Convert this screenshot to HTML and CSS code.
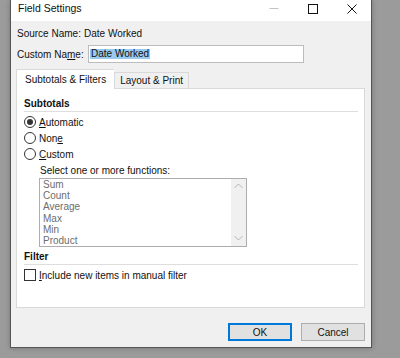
FILE: index.html
```html
<!DOCTYPE html>
<html lang="en">
<head><meta charset="UTF-8">
<meta name="viewport" content="width=device-width,initial-scale=1.0">
<title>Field Settings</title>
<link rel="stylesheet" href="styles.css">
</head>
<body>

<div class="dialog">
  <!-- title bar -->
  <div class="titlebar">
    <span class="title">Field Settings</span>
    <div class="controls">
      <span class="ctl"><svg width="10" height="10" viewBox="0 0 10 10"><path d="M0.5 4.5h9" stroke="#c4c4c4" stroke-width="1"/></svg></span>
      <span class="ctl"><svg width="10" height="10" viewBox="0 0 10 10"><rect x="0.5" y="0.5" width="9" height="9" fill="none" stroke="#111" stroke-width="1"/></svg></span>
      <span class="ctl"><svg width="10" height="10" viewBox="0 0 10 10"><path d="M0.5 0.5l9 9M9.5 0.5l-9 9" stroke="#111" stroke-width="1"/></svg></span>
    </div>
  </div>

  <div class="content">
    <div class="field-row">
      <span class="label">Source Name:</span>
      <span>Date Worked</span>
    </div>
    <div class="field-row name-row">
      <span class="label">Custom Na<u>m</u>e:</span>
      <div class="textbox"><span class="selected">Date Worked</span></div>
    </div>

    <div class="tabs">
      <div class="tab active">Subtotals &amp; Filters</div>
      <div class="tab">Layout &amp; Print</div>
    </div>

    <div class="panel">
      <div class="group-title">Subtotals</div>
      <div class="option"><span class="radio checked"></span><span><u>A</u>utomatic</span></div>
      <div class="option"><span class="radio"></span><span>Non<u>e</u></span></div>
      <div class="option"><span class="radio"></span><span><u>C</u>ustom</span></div>

      <div class="functions">
        <div class="fn-label">Select one or more functions:</div>
        <div class="listbox">
          <ul class="items">
            <li>Sum</li>
            <li>Count</li>
            <li>Average</li>
            <li>Max</li>
            <li>Min</li>
            <li>Product</li>
          </ul>
          <div class="scroll">
            <svg width="9" height="6" viewBox="0 0 9 6"><path d="M0.5 5l4-4 4 4" fill="none" stroke="#b5b5b5" stroke-width="1"/></svg>
            <svg width="9" height="6" viewBox="0 0 9 6"><path d="M0.5 1l4 4 4-4" fill="none" stroke="#b5b5b5" stroke-width="1"/></svg>
          </div>
        </div>
      </div>

      <div class="group-title filter-title">Filter</div>
      <div class="option"><span class="check"></span><span><u>I</u>nclude new items in manual filter</span></div>
    </div>

    <div class="buttons">
      <button class="btn default">OK</button>
      <button class="btn">Cancel</button>
    </div>
  </div>
</div>

</body>
</html>
```

FILE: styles.css
```css
*,*::before,*::after{box-sizing:border-box;margin:0;padding:0}
body{
  height:358px;
  overflow:hidden;
  background:#9b9b9b;
  font-family:"Liberation Sans",Arial,sans-serif;
  font-size:10px;
  color:#111;
}

/* === WINDOW === */
.dialog{
  margin-left:10px;
  width:362px;
  height:348px;
  background:#f0f0f0;
  border:1px solid #555;
  border-top:none;
  box-shadow:0 0 5px rgba(0,0,0,.25);
  display:flex;
  flex-direction:column;
}
.titlebar{
  height:21px;
  background:#fff;
  display:flex;
  align-items:flex-start;
  padding-left:7px;
}
.title{flex:1;font-size:10.5px;line-height:17px}
.controls{display:flex}
.ctl{width:39px;height:17px;display:flex;align-items:center;justify-content:center}
.ctl svg{display:block}

/* === BODY === */
.content{padding:0 6px 0 5px;display:flex;flex-direction:column}
.field-row{display:flex;align-items:center;margin-top:5px;height:14px;padding-left:1px}
.label{width:67px;flex:none}
.name-row{height:18px;margin-top:5px}
.name-row .label{width:71px}
.textbox{
  width:216px;height:18px;
  background:#fff;
  border:1px solid #bcbcbc;
  padding:2px 1px;
  display:flex;align-items:center;
}
.selected{background:#99c9ef;line-height:10px;padding:0 1px}

/* === TABS === */
.tabs{display:flex;align-items:flex-end;margin-top:6px;height:19px}
.tab{
  height:16px;
  padding:0 5px;
  border:1px solid #d9d9d9;
  border-bottom:none;
  line-height:15px;
}
.tab.active{
  height:20px;
  margin-bottom:-1px;
  background:#fff;
  padding:0 8px;
  line-height:19px;
  border-right:none;
  position:relative;
  z-index:1;
}
.panel{
  height:220px;
  background:#fff;
  border:1px solid #d9d9d9;
  padding:8px 6px 0 7px;
}
.group-title{
  font-weight:bold;
  line-height:13px;
  padding-bottom:1px;
  border-bottom:1px solid #dedede;
}
.filter-title{margin-top:3px}

.option{display:flex;align-items:center;height:16px;margin-top:2px}
.option + .option{margin-top:0}
.radio,.check{
  width:12px;height:12px;
  border:1px solid #333;
  margin-right:3px;
  flex:none;
}
.radio{border-radius:50%;display:flex;align-items:center;justify-content:center}
.radio.checked::after{content:"";width:6px;height:6px;border-radius:50%;background:#333}

.functions{margin-left:15px}
.fn-label{line-height:14px;margin-top:2px;padding-left:1px}
.listbox{
  width:208px;height:69px;
  border:1px solid #adadad;
  display:flex;
}
.items{list-style:none;flex:1;padding-left:3px;color:#6d6d6d}
.items li{line-height:11.2px}
.scroll{
  width:15px;
  background:#f0f0f0;
  display:flex;flex-direction:column;justify-content:space-between;align-items:center;
  padding:4px 0 5px;
}
.scroll svg{display:block}

/* === BUTTONS === */
.buttons{display:flex;justify-content:flex-end;gap:9px;margin-top:15px}
.btn{
  width:64px;height:18px;
  font:inherit;
  color:#111;
  background:#e1e1e1;
  border:1px solid #adadad;
}
.btn.default{border:2px solid #0078d7}
```
